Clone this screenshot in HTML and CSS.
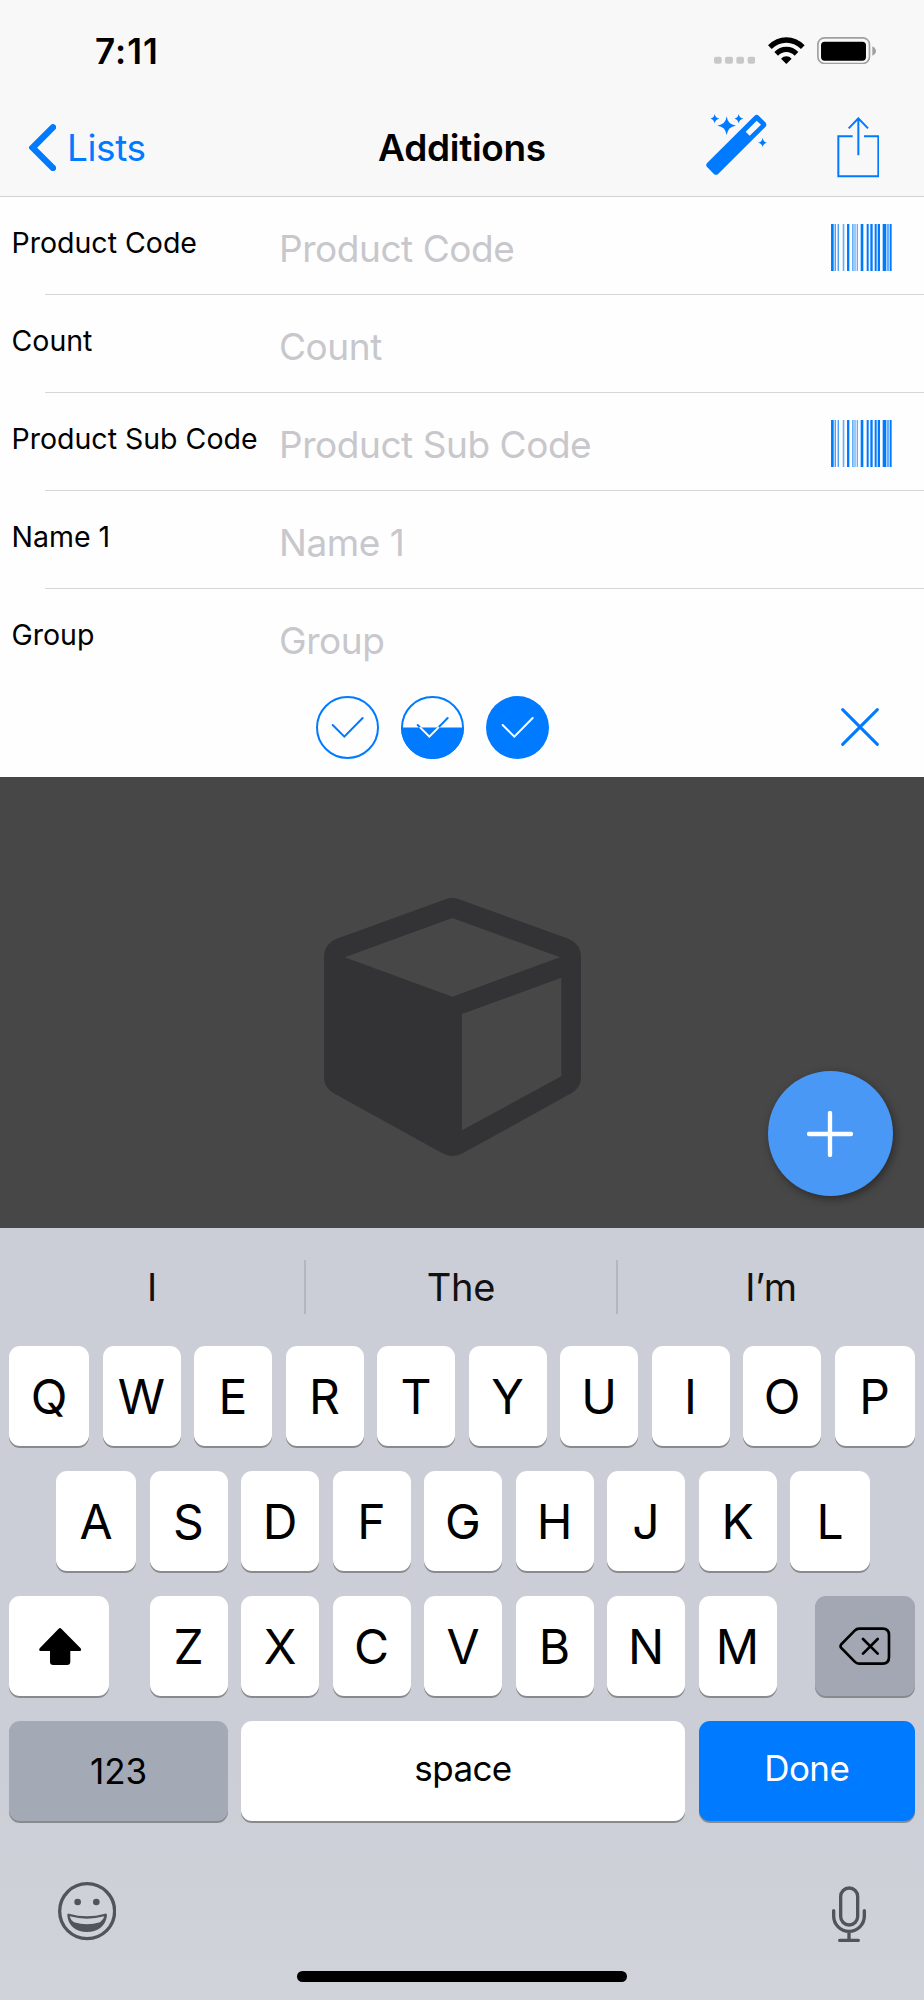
FILE: index.html
```html
<!DOCTYPE html>
<html lang="en">
<head>
  <meta charset="UTF-8">
  <title>Additions</title>
  <link rel="stylesheet" href="styles.css">
</head>
<body>
  <div class="screen">
    <header class="header">
      <div class="status-bar">
        <span class="time">7:11</span>
        <div class="status-icons">
          <svg class="signal" viewBox="756 109 124 82">
            <rect x="756" y="168" width="23" height="21" rx="6"/>
            <rect x="789" y="168" width="24" height="21" rx="6"/>
            <rect x="823" y="168" width="23" height="21" rx="6"/>
            <rect x="857" y="168" width="23" height="21" rx="6"/>
          </svg>
          <svg class="wifi" viewBox="917 109 110 82">
            <path d="M917 134 Q941 110 972 110 Q1003 110 1027 134 L1016 145 Q996 126 972 126 Q948 126 928 145 Z"/>
            <path d="M936 154 Q951 138 972 138 Q993 138 1008 154 L997 165 Q986 154 972 154 Q958 154 947 165 Z"/>
            <path d="M956 174 Q963 167 972 167 Q981 167 988 174 L972 190 Z"/>
          </svg>
          <svg class="battery" viewBox="1065 109 177 82">
            <rect x="1067.500" y="111.500" width="155" height="77" rx="20" fill="none" stroke="#a0a0a0" stroke-width="5"/>
            <rect x="1077" y="123" width="135" height="57" rx="11"/>
            <path d="M1231 137 Q1242 143 1242 151 Q1242 160 1231 165 Z" fill="#a0a0a0"/>
          </svg>
        </div>
      </div>
      <nav class="nav">
        <a class="back">
          <svg class="chevron" viewBox="86 372 82 142"><path d="M158 382 L97 443 L158 504"/></svg>
          <span>Lists</span>
        </a>
        <h1 class="title">Additions</h1>
        <div class="actions">
          <svg class="wand" viewBox="732 342 183 183">
            <path fill-rule="evenodd" d="M877 348 Q884 341 891 348 L910 367 Q916 374 910 381 L769 521 Q762 528 755 521 L736 502 Q729 495 736 488 Z M884 362 L851 395 L863 407 L897 374 Z"/>
            <path d="M794 349 Q797 374 822 377 Q797 380 794 405 Q791 380 766 377 Q791 374 794 349 Z"/>
            <path d="M758 342 Q760 354 772 356 Q760 358 758 370 Q756 358 745 356 Q756 354 758 342 Z"/>
            <path d="M830 342 Q832 354 844 356 Q832 358 830 370 Q828 358 817 356 Q828 354 830 342 Z"/>
            <path d="M902 413 Q904 426 915 428 Q904 430 902 441 Q900 430 888 428 Q900 426 902 413 Z"/>
          </svg>
          <svg class="share" viewBox="1124 350 128 182">
            <path d="M1171 408 H1128 V528 H1248 V408 H1205 M1188 465 V354 M1159 384 L1188 354 L1217 384"/>
          </svg>
        </div>
      </nav>
    </header>

    <form class="fields">
      <div class="row">
        <label for="code">Product Code</label>
        <input id="code" type="text" placeholder="Product Code">
        <svg class="barcode" viewBox="1108 0 182 142">
          <path d="M1108 0h8v142h-8z M1119 0h3v142h-3z M1128 0h3v142h-3z M1156 0h7v142h-7z M1197 0h8v142h-8z M1215 0h6v142h-6z M1226 0h7v142h-7z M1239 0h6v142h-6z M1248 0h7v142h-7z M1263 0h11v142h-11z M1284 0h6v142h-6z"/>
          <path class="light" d="M1143 0h5v142h-5z M1171 0h5v142h-5z M1178 0h4v142h-4z M1185 0h4v142h-4z M1276 0h6v142h-6z"/>
        </svg>
      </div>
      <div class="row">
        <label for="count">Count</label>
        <input id="count" type="text" placeholder="Count">
      </div>
      <div class="row">
        <label for="sub-code">Product Sub Code</label>
        <input id="sub-code" type="text" placeholder="Product Sub Code">
        <svg class="barcode" viewBox="1108 0 182 142">
          <path d="M1108 0h8v142h-8z M1119 0h3v142h-3z M1128 0h3v142h-3z M1156 0h7v142h-7z M1197 0h8v142h-8z M1215 0h6v142h-6z M1226 0h7v142h-7z M1239 0h6v142h-6z M1248 0h7v142h-7z M1263 0h11v142h-11z M1284 0h6v142h-6z"/>
          <path class="light" d="M1143 0h5v142h-5z M1171 0h5v142h-5z M1178 0h4v142h-4z M1185 0h4v142h-4z M1276 0h6v142h-6z"/>
        </svg>
      </div>
      <div class="row">
        <label for="name1">Name 1</label>
        <input id="name1" type="text" placeholder="Name 1">
      </div>
      <div class="row last">
        <label for="group">Group</label>
        <input id="group" type="text" placeholder="Group">
      </div>
    </form>

    <div class="toolbar">
      <div class="checks">
        <svg class="check" viewBox="0 0 189 189">
          <circle cx="94.500" cy="94.500" r="91.500"/>
          <path d="M50 87 L85 122 L140 66"/>
        </svg>
        <svg class="check" viewBox="0 0 189 189">
          <circle cx="94.500" cy="94.500" r="91.500"/>
          <path d="M50 87 L85 122 L140 66"/>
          <path class="half" d="M0 94.500 A94.500 94.500 0 0 0 189 94.500 Z"/>
          <path class="white" d="M58 95 L85 122 L112 95"/>
        </svg>
        <svg class="check" viewBox="0 0 189 189">
          <circle class="full" cx="94.500" cy="94.500" r="94.500"/>
          <path class="white" d="M50 87 L85 122 L140 66"/>
        </svg>
      </div>
      <svg class="close" viewBox="0 0 114 114"><path d="M5 5 L109 109 M109 5 L5 109"/></svg>
    </div>

    <main class="content">
      <svg class="cube" viewBox="72 84 771 774">
        <path fill-rule="evenodd" d="M437 88 Q457 80 477 88 L805 206 Q843 222 843 262 V624 Q843 652 815 669 L488 850 Q457 866 427 850 L100 669 Q72 652 72 624 V262 Q72 222 110 206 Z M457 144 L134 262 L457 380 L780 262 Z M486 432 V781 L784 619 V323 Z"/>
      </svg>
      <!-- floating add button -->
      <button class="fab">
        <svg viewBox="0 0 138 138"><path d="M69 6 V132 M6 69 H132"/></svg>
      </button>
    </main>

    <section class="keyboard">
      <div class="suggestions">
        <span>I</span>
        <span>The</span>
        <span>I’m</span>
      </div>
      <div class="keys">
        <div class="key-row">
          <div class="key edge">Q</div><div class="key">W</div><div class="key">E</div><div class="key">R</div><div class="key">T</div><div class="key">Y</div><div class="key">U</div><div class="key">I</div><div class="key">O</div><div class="key edge">P</div>
        </div>
        <div class="key-row middle">
          <div class="key edge">A</div><div class="key">S</div><div class="key">D</div><div class="key">F</div><div class="key">G</div><div class="key">H</div><div class="key">J</div><div class="key">K</div><div class="key edge">L</div>
        </div>
        <div class="key-row">
          <div class="key shift">
            <svg viewBox="119 147 127 111"><path d="M178 149 Q182 145 186 149 L244 208 Q248 216 241 216 H213 V248 Q213 258 203 258 H162 Q152 258 152 248 V216 H124 Q117 216 121 208 Z"/></svg>
          </div>
          <div class="key">Z</div><div class="key">X</div><div class="key">C</div><div class="key">V</div><div class="key">B</div><div class="key">N</div><div class="key">M</div>
          <div class="key delete">
            <svg viewBox="1132 144 155 115"><path d="M1192 149 H1263 Q1282 149 1282 168 V235 Q1282 254 1263 254 H1192 Q1185 254 1179 248 L1138 206 Q1135 202 1138 197 L1179 155 Q1185 149 1192 149 Z M1204 180 L1248 224 M1248 180 L1204 224"/></svg>
          </div>
        </div>
        <div class="key-row">
          <div class="key numbers">123</div>
          <div class="key space">space</div>
          <div class="key done">Done</div>
        </div>
      </div>
      <div class="bottom">
        <svg class="emoji" viewBox="174 906 175 175">
          <circle cx="261.500" cy="993.500" r="82.500"/>
          <circle class="solid" cx="233" cy="966" r="10"/>
          <circle class="solid" cx="289" cy="966" r="10"/>
          <path class="solid" fill-rule="evenodd" d="M207 1001 Q261 1017 315 1001 Q322 1000 321 1008 C316 1040 292 1056 261 1056 C230 1056 206 1040 202 1008 Q201 1000 207 1001 Z M209 1009 Q212 1021 222 1027 Q261 1039 300 1027 Q311 1019 313 1009 Q261 1023 209 1009 Z"/>
        </svg>
        <svg class="mic" viewBox="1110 917 102 170">
          <rect x="1136" y="923" width="51" height="111" rx="25.500"/>
          <path d="M1115 991 V1007 A46 46 0 0 0 1207 1007 V991 M1161 1053 V1080 M1133 1080 H1189"/>
        </svg>
      </div>
      <div class="home-bar"></div>
    </section>
  </div>
</body>
</html>
```

FILE: styles.css
```css
* {
  box-sizing: border-box;
}
body {
  margin: 0;
  font-family: Inter, "Liberation Sans", sans-serif;
  color: #000;
}
svg {
  display: block;
  flex: none;
}
.screen {
  width: 924px;
  height: 2000px;
  display: flex;
  flex-direction: column;
  background: #fefefe;
  overflow: hidden;
}

/* header */
.header {
  height: 197px;
  background: #f8f8f8;
  border-bottom: 1px solid #d2d2d3;
}
.status-bar {
  height: 101px;
  padding: 0 48px 0 95px;
  display: flex;
  justify-content: space-between;
  align-items: center;
}
.time {
  font-size: 35px;
  font-weight: 600;
  letter-spacing: 1px;
}
.status-icons {
  display: flex;
  gap: 12.500px;
}
.status-icons svg {
  height: 27.300px;
}
.signal {
  width: 41.300px;
  fill: #c8c8c8;
}
.wifi {
  width: 36.700px;
}
.battery {
  width: 59px;
}
.nav {
  height: 93px;
  padding: 0 44.700px 0 28.700px;
  display: grid;
  grid-template-columns: 1fr auto 1fr;
  align-items: center;
}
.back {
  display: flex;
  align-items: center;
  gap: 11px;
  color: #007aff;
  font-size: 37px;
  letter-spacing: -0.4px;
}
.chevron {
  width: 27.300px;
  height: 47.300px;
  fill: none;
  stroke: #007aff;
  stroke-width: 19;
  stroke-linecap: round;
}
.title {
  margin: 0 -8px 0 8px;
  font-size: 37px;
  font-weight: 600;
  letter-spacing: -0.3px;
}
.actions {
  display: flex;
  justify-content: flex-end;
  align-items: center;
  gap: 69.800px;
}
.wand {
  width: 61px;
  height: 61px;
  margin-bottom: 6px;
  fill: #007aff;
}
.share {
  width: 42.700px;
  height: 60.700px;
  fill: none;
  stroke: #007aff;
  stroke-width: 6;
}

/* form */
.row {
  height: 98px;
  padding: 0 32px 0 11.500px;
  display: flex;
  align-items: center;
  background: linear-gradient(#d6d6d8, #d6d6d8) 45px 100% / 100% 1px no-repeat;
}
.row label {
  width: 267.500px;
  padding-bottom: 7px;
  font-size: 28.500px;
  white-space: nowrap;
}
.row input {
  flex: 1;
  min-width: 0;
  padding: 4px 0 0;
  border: none;
  outline: none;
  background: none;
  font-family: inherit;
  font-size: 37px;
  letter-spacing: -0.450px;
}
.row input::placeholder {
  color: #c7c7cc;
  opacity: 1;
}
.row.last {
  height: 88px;
  padding-top: 9px;
  background: none;
}
.row.last input {
  padding-top: 6px;
}
.barcode {
  width: 60.700px;
  height: 47.300px;
  margin-top: 3px;
  fill: #007aff;
}
.barcode .light {
  opacity: 0.6;
}

.toolbar {
  height: 100px;
  padding: 0 45px 0 316px;
  display: flex;
  justify-content: space-between;
  align-items: center;
}
.checks {
  display: flex;
  gap: 21.800px;
}
.check {
  width: 63px;
  height: 63px;
  fill: none;
  stroke: #007aff;
  stroke-width: 6;
  stroke-linecap: round;
}
.check .half, .check .full {
  fill: #007aff;
  stroke: none;
}
.check .white {
  stroke: #fff;
}
.close {
  width: 38px;
  height: 38px;
  stroke: #007aff;
  stroke-width: 9;
  stroke-linecap: round;
}

/* empty list */
.content {
  position: relative;
  height: 451px;
  padding: 121px 0 0 324px;
  background: #474747;
}
.cube {
  width: 257px;
  height: 258px;
  fill: #333335;
}
.fab {
  position: absolute;
  right: 31.500px;
  bottom: 32px;
  width: 125px;
  height: 125px;
  padding: 0;
  border: none;
  border-radius: 50%;
  background: #4a98f5;
  box-shadow: 2px 3px 8px rgba(0, 0, 0, 0.4);
  display: flex;
  justify-content: center;
  align-items: center;
}
.fab svg {
  width: 46px;
  height: 46px;
  stroke: #fff;
  stroke-width: 13;
  stroke-linecap: round;
}

/* keyboard */
.keyboard {
  height: 772px;
  background: linear-gradient(#cbced6 70%, #d0d3d9);
}
.suggestions {
  height: 118px;
  padding-top: 32px;
  display: grid;
  grid-template-columns: 304px 312px 308px;
}
.suggestions span {
  height: 54px;
  display: flex;
  justify-content: center;
  align-items: center;
  font-size: 38px;
  letter-spacing: -0.3px;
  color: #111;
}
.suggestions span + span {
  border-left: 2px solid #b4b7bd;
}
.keys {
  padding: 0 9px;
  display: flex;
  flex-direction: column;
  gap: 25px;
}
.key-row {
  display: flex;
  gap: 13.500px;
}
.key-row.middle {
  padding-left: 47px;
}
.key {
  width: 78px;
  height: 100px;
  flex: none;
  display: flex;
  justify-content: center;
  align-items: center;
  border-radius: 11px;
  background: #fff;
  box-shadow: 0 2px 0 #898a8e;
  font-size: 48px;
}
.key.edge {
  width: 80px;
}
.key.shift {
  width: 100px;
  margin-right: 27px;
}
.shift svg {
  width: 42.300px;
  height: 37px;
  margin-left: 3px;
}
.key.delete {
  width: 100px;
  margin-left: 25px;
  background: #a2a7b3;
}
.delete svg {
  width: 51.700px;
  height: 38.300px;
  fill: none;
  stroke: #000;
  stroke-width: 8;
  stroke-linecap: round;
}
.key.numbers {
  width: 219px;
  background: #a3a9b5;
  font-size: 35px;
}
.key.space {
  width: 444px;
  margin-left: -0.500px;
  padding-bottom: 6px;
  font-size: 35px;
  letter-spacing: -0.6px;
}
.key.done {
  width: 216.500px;
  padding-bottom: 6px;
  background: #007aff;
  color: #fff;
  font-size: 35px;
  letter-spacing: -0.6px;
}
.bottom {
  height: 150px;
  padding: 31px 58px 0 58px;
  display: flex;
  justify-content: space-between;
  align-items: center;
}
.emoji {
  width: 58.300px;
  height: 58.300px;
  fill: none;
  stroke: #50555c;
  stroke-width: 10;
}
.emoji .solid {
  fill: #50555c;
  stroke: none;
}
.mic {
  width: 34px;
  height: 56.700px;
  margin-top: 5px;
  fill: none;
  stroke: #50555c;
  stroke-width: 10;
  stroke-linecap: round;
}
.home-bar {
  width: 330px;
  height: 11px;
  margin: 0 auto;
  border-radius: 6px;
  background: #000;
}
```
